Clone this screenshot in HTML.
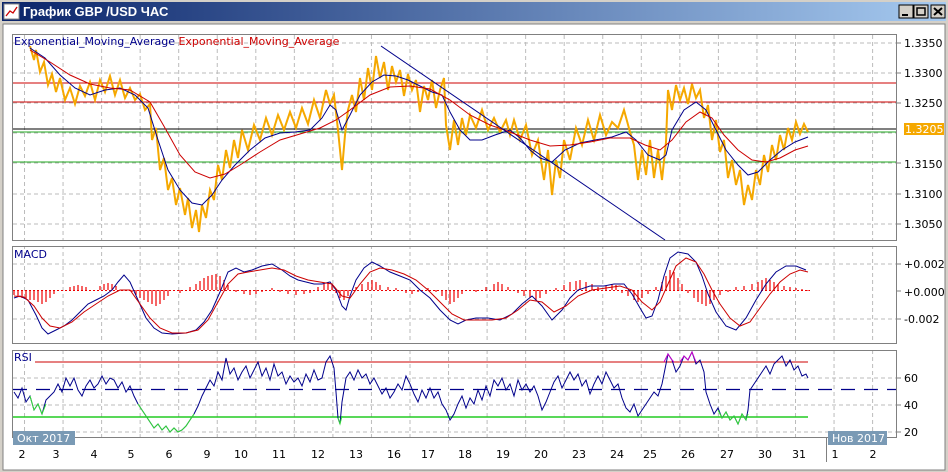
<!DOCTYPE html>
<html><head><meta charset="utf-8"><style>
body{margin:0;width:948px;height:472px;background:#d4d0c8;overflow:hidden;font-family:"Liberation Sans","DejaVu Sans",sans-serif}
.t{font-family:"DejaVu Sans","Liberation Sans",sans-serif;font-size:11px}
</style></head><body>
<svg width="948" height="472" xmlns="http://www.w3.org/2000/svg" style="position:absolute;left:0;top:0">
<defs><linearGradient id="tb" x1="0" x2="1"><stop offset="0" stop-color="#0a246a"/><stop offset="1" stop-color="#a6caf0"/></linearGradient>
<pattern id="gx" x="24" y="0" width="38.55" height="472" patternUnits="userSpaceOnUse"><line x1="0.5" y1="0" x2="0.5" y2="472" stroke="#bbb" stroke-dasharray="4,3"/></pattern></defs>
<rect x="0" y="0" width="948" height="472" fill="#d4d0c8"/>
<rect x="2" y="2" width="944" height="19" fill="url(#tb)"/>
<rect x="4" y="4" width="15" height="15" fill="#fff" stroke="#888"/>
<polyline points="6,16 10,11 13,13 17,7" fill="none" stroke="#c00" stroke-width="1.3"/>
<text x="23" y="16" font-family="Liberation Sans,sans-serif" font-weight="bold" font-size="13" fill="#fff">График GBP /USD  ЧАС</text>
<g stroke="#000" fill="#d4d0c8"><rect x="899" y="5" width="14" height="13"/><rect x="914" y="5" width="14" height="13"/><rect x="931" y="5" width="14" height="13"/></g>
<line x1="902" y1="15" x2="908" y2="15" stroke="#000" stroke-width="2"/>
<rect x="917" y="8" width="8" height="7" fill="none" stroke="#000" stroke-width="1.5"/>
<path d="M934,8 L942,15 M942,8 L934,15" stroke="#000" stroke-width="2"/>
<rect x="3" y="24" width="942" height="446" fill="#fff" stroke="#808080"/>
<!-- panels -->
<g fill="#fff" stroke="#808080"><rect x="12.5" y="34.5" width="884" height="206"/><rect x="12.5" y="246.5" width="884" height="97"/><rect x="12.5" y="350.5" width="884" height="87"/></g>
<rect x="13" y="35" width="883" height="205" fill="url(#gx)"/>
<rect x="13" y="247" width="883" height="96" fill="url(#gx)"/>
<rect x="13" y="351" width="883" height="86" fill="url(#gx)"/>
<g stroke="#bbb" stroke-dasharray="4,3"><line x1="13" y1="43" x2="896" y2="43"/><line x1="13" y1="73" x2="896" y2="73"/><line x1="13" y1="103" x2="896" y2="103"/><line x1="13" y1="133" x2="896" y2="133"/><line x1="13" y1="163" x2="896" y2="163"/><line x1="13" y1="194" x2="896" y2="194"/><line x1="13" y1="224" x2="896" y2="224"/>
<line x1="13" y1="264" x2="896" y2="264"/><line x1="13" y1="319" x2="896" y2="319"/>
<line x1="13" y1="378" x2="896" y2="378"/><line x1="13" y1="405" x2="896" y2="405"/><line x1="13" y1="432" x2="896" y2="432"/></g>
<!-- main levels -->
<line x1="13" y1="83" x2="896" y2="83" stroke="#c00"/>
<line x1="13" y1="102" x2="896" y2="102" stroke="#c00"/>
<line x1="13" y1="129" x2="896" y2="129" stroke="#000"/>
<line x1="13" y1="132" x2="896" y2="132" stroke="#2a2"/>
<line x1="13" y1="162" x2="896" y2="162" stroke="#2a2"/>
<polyline fill="none" stroke="#f5a800" stroke-width="2" points="30,46 34,60 36,50 40,72 44,62 48,85 52,74 56,92 60,78 65,100 70,88 75,104 80,86 85,96 90,82 95,100 100,80 105,92 110,76 115,95 120,80 125,98 130,88 135,100 140,94 145,110 150,104 152,140 156,128 160,170 164,158 168,190 172,178 176,205 180,188 185,215 188,198 192,228 196,210 199,232 202,205 206,218 210,190 214,200 218,165 222,180 226,150 230,168 234,140 238,158 242,130 248,150 254,125 260,140 266,118 272,135 278,115 284,130 290,112 296,128 302,108 308,124 314,100 320,118 326,90 330,104 334,95 338,130 342,170 345,135 348,110 352,95 356,112 360,78 364,100 368,68 372,90 376,56 380,78 384,62 388,90 392,66 396,82 400,70 404,96 408,74 412,90 416,80 420,112 424,86 428,100 432,80 436,108 440,90 444,78 446,125 450,150 454,120 458,145 462,118 466,135 470,115 476,128 482,110 488,130 494,118 500,132 506,120 510,135 514,120 520,140 526,125 532,155 538,140 544,180 548,150 552,195 556,160 560,178 564,140 570,160 576,128 582,145 588,120 594,140 600,115 606,135 612,122 618,128 624,110 630,132 634,145 638,180 642,150 646,175 650,140 654,178 658,150 662,180 666,142 668,90 672,110 676,85 680,100 684,88 688,104 692,84 696,98 700,90 704,118 708,105 712,140 716,120 720,152 724,140 728,178 732,160 736,185 740,170 744,205 748,185 752,200 756,170 760,185 764,155 768,172 772,145 776,160 780,135 784,150 788,128 792,140 796,122 800,134 804,124 808,132"/>
<polyline fill="none" stroke="#00008b" points="30,48 45,58 60,75 75,88 90,95 105,90 120,88 135,95 148,108 158,140 168,170 180,190 192,203 202,205 212,195 222,180 235,165 250,150 265,138 280,133 295,132 310,130 322,118 330,105 336,110 342,130 350,115 360,95 372,82 384,75 396,76 408,80 420,86 432,92 442,95 450,112 460,130 470,140 482,140 495,135 510,130 520,138 530,150 540,158 552,162 565,150 580,143 595,140 612,137 626,132 636,140 648,155 660,160 666,155 672,130 684,110 696,102 706,110 716,130 726,150 738,165 748,175 758,172 770,160 782,150 795,142 808,137"/>
<polyline fill="none" stroke="#c00" points="30,50 50,62 70,75 90,84 110,88 130,90 150,102 165,128 180,155 195,172 210,178 225,174 240,165 260,152 280,140 300,134 320,128 336,120 350,110 370,95 390,87 410,86 430,89 450,100 470,115 490,125 510,132 530,140 550,146 570,145 590,142 610,138 630,138 645,145 660,150 672,140 686,122 700,112 712,118 724,135 738,150 752,160 766,162 780,158 795,150 808,146"/>
<line x1="381" y1="46" x2="665" y2="240" stroke="#00008b"/>
<text x="14" y="45" class="t" fill="#00008b">Exponential_Moving_Average <tspan fill="#c00">Exponential_Moving_Average</tspan></text>
<!-- right axis -->
<g class="t" fill="#000" font-size="11"><text x="904" y="47">1.3350</text><text x="904" y="77">1.3300</text><text x="904" y="107">1.3250</text><text x="904" y="168">1.3150</text><text x="904" y="198">1.3100</text><text x="904" y="228">1.3050</text>
<text x="904" y="268">+0.002</text><text x="904" y="296">+0.000</text><text x="904" y="323">-0.002</text><text x="904" y="382">60</text><text x="904" y="409">40</text><text x="904" y="436">20</text></g>
<rect x="904" y="123" width="40" height="12" fill="#f5a800"/><text x="905" y="133" class="t" fill="#fff">1.3205</text>
<g stroke="#808080"><line x1="897" y1="43" x2="901" y2="43"/><line x1="897" y1="73" x2="901" y2="73"/><line x1="897" y1="103" x2="901" y2="103"/><line x1="897" y1="163" x2="901" y2="163"/><line x1="897" y1="194" x2="901" y2="194"/><line x1="897" y1="224" x2="901" y2="224"/><line x1="897" y1="264" x2="901" y2="264"/><line x1="897" y1="291" x2="901" y2="291"/><line x1="897" y1="319" x2="901" y2="319"/><line x1="897" y1="378" x2="901" y2="378"/><line x1="897" y1="405" x2="901" y2="405"/><line x1="897" y1="432" x2="901" y2="432"/></g>
<!-- MACD -->
<text x="14" y="258" class="t" fill="#00008b">MACD</text>
<path stroke="#e00" stroke-width="1.2" d="M14,290v5M18,290v7M22,290v8M26,290v9M30,290v10M34,290v10M38,290v12M42,290v14M46,290v12M50,290v8M54,290v4M70,290v-3M74,290v-4M78,290v-5M82,290v-4M86,290v-3M100,290v-4M104,290v-6M108,290v-7M112,290v-6M116,290v-4M132,290v2M136,290v5M140,290v8M144,290v10M148,290v12M152,290v14M156,290v16M160,290v14M164,290v10M168,290v6M180,290v3M190,290v-3M196,290v-6M200,290v-9M204,290v-12M208,290v-14M212,290v-15M216,290v-16M220,290v-14M224,290v-10M228,290v-5M236,290v2M244,290v4M250,290v5M256,290v4M262,290v2M272,290v-2M280,290v2M288,290v4M296,290v5M304,290v4M310,290v3M318,290v-3M324,290v-6M328,290v-8M332,290v-6M336,290v3M340,290v8M344,290v10M348,290v6M356,290v-3M362,290v-6M368,290v-8M372,290v-10M376,290v-8M380,290v-5M388,290v-3M396,290v-2M406,290v3M412,290v4M418,290v2M428,290v-2M436,290v2M442,290v6M446,290v10M450,290v14M454,290v12M458,290v8M462,290v4M476,290v2M486,290v-3M494,290v-6M498,290v-8M502,290v-6M508,290v-3M518,290v3M524,290v6M530,290v8M536,290v10M540,290v8M546,290v4M556,290v-2M564,290v-5M570,290v-8M576,290v-9M580,290v-10M586,290v-8M592,290v-6M598,290v-3M606,290v-4M612,290v-6M616,290v-5M622,290v3M628,290v6M634,290v10M638,290v12M642,290v8M648,290v4M656,290v-3M662,290v-8M666,290v-14M670,290v-20M674,290v-18M678,290v-12M682,290v-6M688,290v3M694,290v8M698,290v12M702,290v14M706,290v16M710,290v14M714,290v10M720,290v5M728,290v2M736,290v-3M744,290v-4M752,290v-6M758,290v-8M762,290v-10M766,290v-12M770,290v-10M774,290v-8M778,290v-6M784,290v-4M790,290v-3M796,290v-2M802,290v-1M808,290v1"/>
<line x1="13" y1="290.5" x2="810" y2="290.5" stroke="#e00" stroke-dasharray="2,2"/>
<polyline fill="none" stroke="#00008b" points="14,298 20,296 28,300 36,315 42,328 48,334 56,330 64,326 72,320 80,312 88,304 96,300 104,296 112,290 118,282 124,275 130,282 138,300 146,318 154,328 162,333 172,334 186,333 196,330 204,322 212,310 220,292 228,272 236,268 244,272 252,270 262,266 272,264 282,270 290,276 298,280 306,282 314,284 322,284 330,282 336,290 342,306 346,310 350,296 356,280 364,268 372,262 380,266 390,272 400,276 410,280 420,290 430,298 440,310 450,320 458,324 466,320 476,318 488,318 500,320 512,314 522,304 532,296 542,306 552,320 562,310 570,298 578,290 590,286 604,286 614,284 624,284 632,294 640,308 646,318 652,316 658,300 664,276 670,258 678,252 688,254 696,262 702,276 708,294 716,312 726,326 736,330 746,318 756,300 766,284 776,272 786,266 796,266 806,270"/>
<polyline fill="none" stroke="#c00" points="14,296 24,297 34,306 42,318 50,326 60,328 72,322 84,312 96,304 108,296 120,290 130,290 140,304 150,318 160,328 172,333 186,333 198,330 208,320 218,302 228,284 238,274 248,272 260,270 272,268 284,270 296,276 308,280 320,282 332,284 342,296 350,298 360,284 370,272 380,268 392,270 404,274 416,280 428,290 440,302 452,314 464,320 478,320 492,320 506,318 518,310 530,300 542,302 554,312 566,306 578,296 592,290 606,288 620,286 632,290 642,302 652,310 660,302 668,284 676,266 686,258 696,262 704,274 712,290 720,304 730,318 740,326 750,322 760,308 770,294 780,282 790,274 800,270 808,272"/>
<!-- RSI -->
<text x="14" y="361" class="t" fill="#00008b">RSI</text>
<line x1="35" y1="362" x2="808" y2="362" stroke="#c00"/>
<line x1="13" y1="417" x2="808" y2="417" stroke="#2c2" stroke-width="1.5"/>
<line x1="13" y1="389.5" x2="896" y2="389.5" stroke="#00008b" stroke-width="1.2" stroke-dasharray="14,9"/>
<polyline fill="none" stroke="#00008b" points="14,392 18,398 22,388 26,402 30,396 34,410 38,404 42,414 46,400 50,396 54,392 58,384 62,392 66,378 70,386 74,378 78,390 82,396 86,386 90,380 94,388 98,384 102,376 106,384 110,378 114,380 118,388 122,382 126,392 130,386 134,396 138,404 142,410 146,416 150,422 154,428 158,424 162,430 166,426 170,432 174,428 178,432 182,430 186,426 190,420 194,414 198,406 202,396 206,388 210,380 214,386 218,372 222,380 226,358 230,374 234,368 238,380 242,372 246,366 250,378 254,370 258,362 262,376 266,368 270,380 274,364 278,376 282,372 286,384 290,376 294,382 298,378 302,386 306,374 310,382 314,370 318,380 322,378 326,362 330,356 334,368 336,392 338,418 340,424 342,402 346,378 350,372 354,380 358,370 362,378 366,374 370,384 374,378 378,386 382,394 386,388 390,398 394,392 398,384 402,390 406,376 410,384 414,394 418,402 422,390 426,398 430,388 434,398 438,392 442,404 446,410 450,420 454,414 458,404 462,396 466,408 470,398 474,404 478,390 482,400 486,386 490,396 494,380 498,386 502,378 506,390 510,384 514,396 518,380 522,390 526,384 530,392 534,386 538,396 542,410 546,402 550,392 554,382 558,376 562,388 566,380 570,372 574,380 578,374 582,386 586,380 590,394 594,384 598,376 602,384 606,372 610,380 614,388 618,384 622,398 626,408 630,412 634,404 638,416 642,410 646,404 650,398 654,392 658,396 662,384 664,374 668,354 672,360 676,372 680,366 684,356 688,360 692,352 696,364 700,360 704,372 706,392 710,404 714,414 718,408 722,418 726,412 730,420 734,416 738,424 742,414 746,420 748,410 750,390 754,384 758,378 762,372 766,366 770,374 774,364 778,360 782,356 786,366 790,360 794,370 798,366 802,376 806,374 808,378"/>
<polyline fill="none" stroke="#3d3" points="30,396 34,410 38,404 42,414 46,404 M138,404 142,410 146,416 150,422 154,428 158,424 162,430 166,426 170,432 174,428 178,432 182,430 186,426 190,420 194,414"/>
<path fill="none" stroke="#3d3" d="M138,404 L142,410 146,416 150,422 154,428 158,424 162,430 166,426 170,432 174,428 178,432 182,430 186,426 190,420 194,414 M338,418 L340,424 342,416 M718,410 L722,418 726,412 730,420 734,416 738,424 742,414 746,420 748,414"/>
<path fill="none" stroke="#c0c" d="M664,362 L668,354 672,360 674,362 M680,362 L684,356 688,360 692,352 696,362"/>
<!-- bottom axis -->
<line x1="13" y1="437.5" x2="896" y2="437.5" stroke="#808080"/>
<line x1="826.5" y1="437" x2="826.5" y2="462" stroke="#808080"/>
<rect x="13" y="431" width="62" height="14" fill="#7a9ab5"/><text x="17" y="442" class="t" fill="#fff">Окт 2017</text>
<rect x="828" y="431" width="59" height="14" fill="#7a9ab5"/><text x="832" y="442" class="t" fill="#fff">Нов 2017</text>
<g class="t" fill="#000" text-anchor="middle"><text x="22" y="458">2</text><text x="56" y="458">3</text><text x="94" y="458">4</text><text x="131" y="458">5</text><text x="169" y="458">6</text><text x="207" y="458">9</text><text x="241" y="458">10</text><text x="279" y="458">11</text><text x="318" y="458">12</text><text x="356" y="458">13</text><text x="394" y="458">16</text><text x="428" y="458">17</text><text x="465" y="458">18</text><text x="503" y="458">19</text><text x="541" y="458">20</text><text x="579" y="458">23</text><text x="617" y="458">24</text><text x="650" y="458">25</text><text x="688" y="458">26</text><text x="727" y="458">27</text><text x="765" y="458">30</text><text x="799" y="458">31</text><text x="835" y="458">1</text><text x="873" y="458">2</text></g>
</svg>
</body></html>
